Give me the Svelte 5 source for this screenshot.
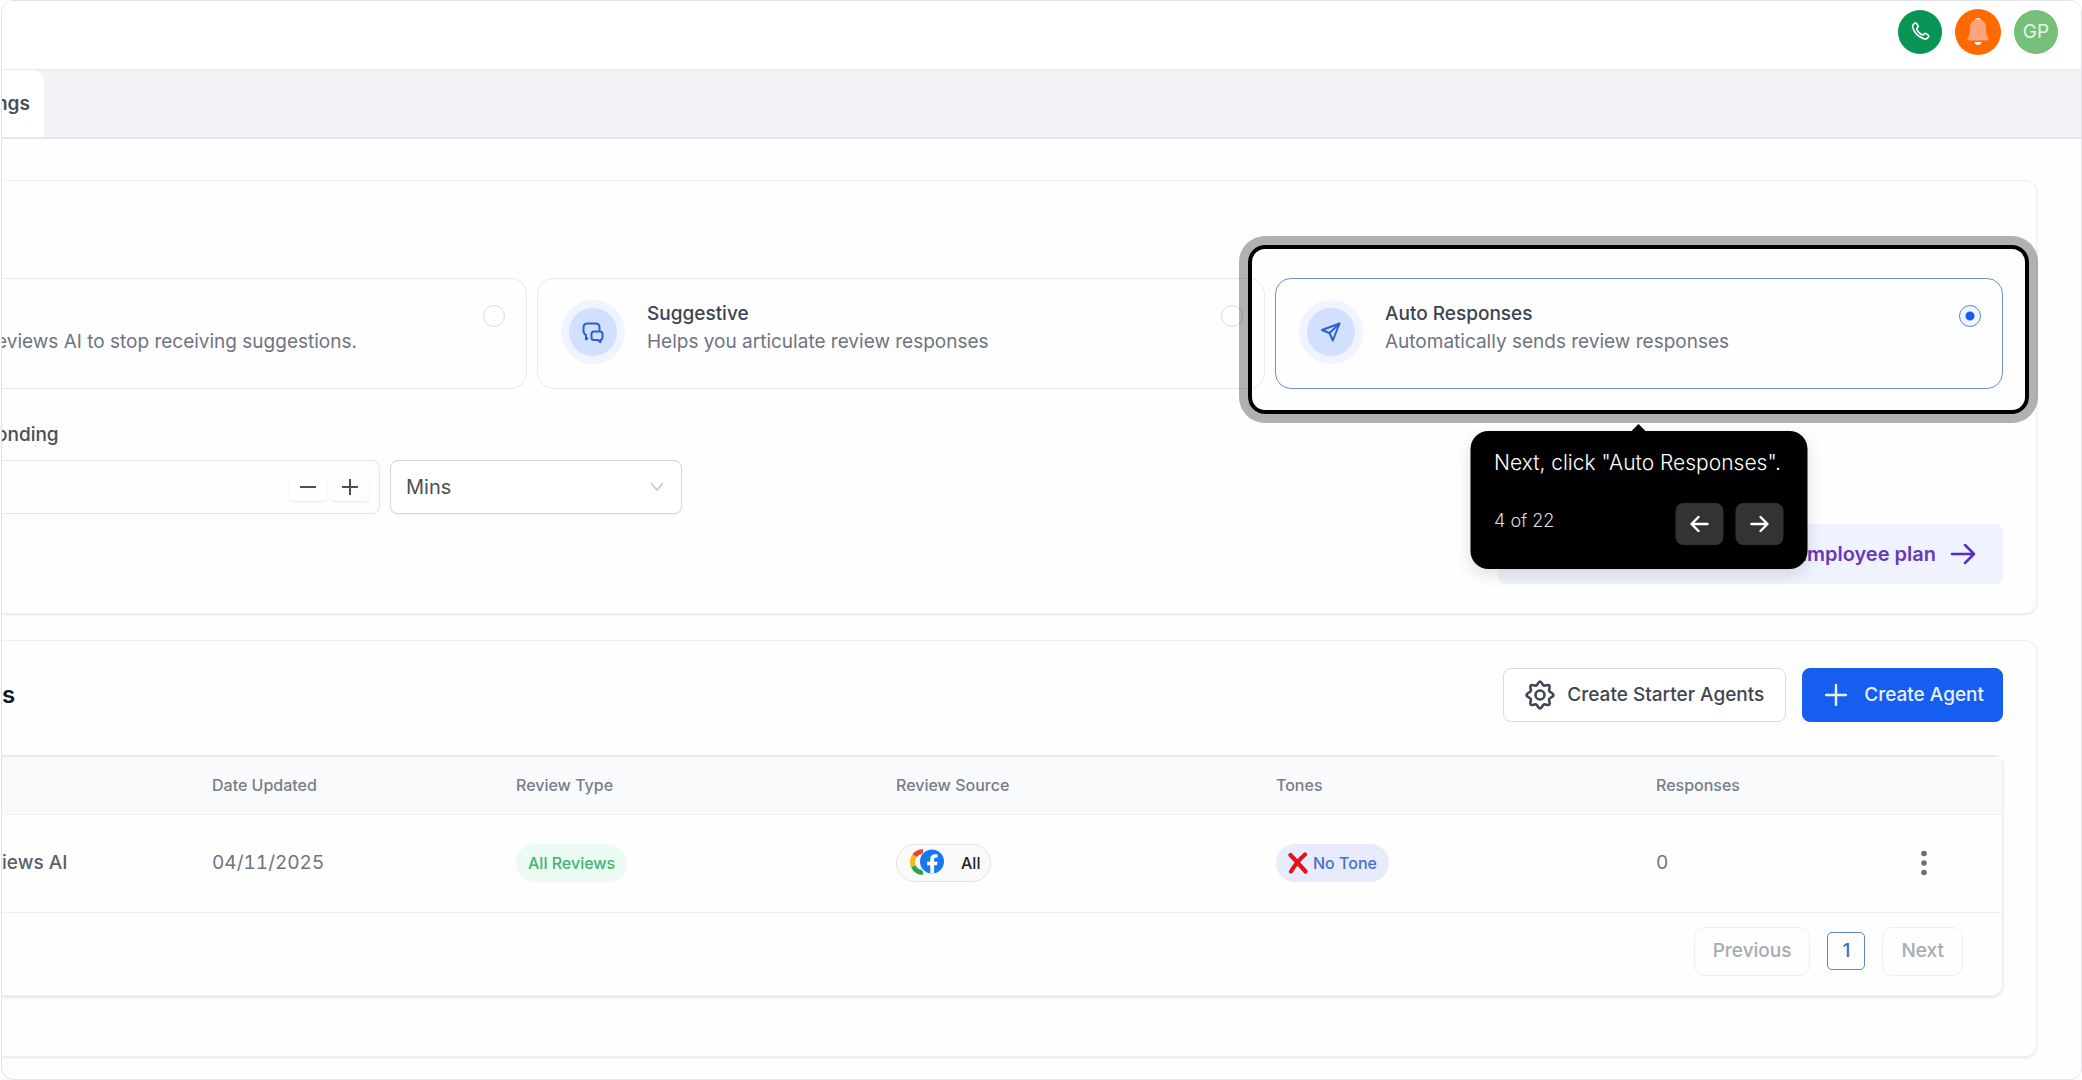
<!-- App.svelte — Reviews AI settings with guided walkthrough -->
<script lang="ts">
  type Mode = { id: string; title: string; text: string; icon: "" | "chat" | "send" };

  const modes: Mode[] = [
    { id: "off", title: "", text: "eviews AI to stop receiving suggestions.", icon: "" },
    { id: "suggestive", title: "Suggestive", text: "Helps you articulate review responses", icon: "chat" },
    { id: "auto", title: "Auto Responses", text: "Automatically sends review responses", icon: "send" },
  ];
  const agents = [{ name: "iews AI", updated: "04/11/2025", type: "All Reviews", source: "All", tone: "No Tone", responses: 0 }];
  const TOTAL = 22;

  let mode = $state("auto");
  let unit = $state("Mins");
  let wait = $state("");
  let step = $state(4);

  function bump(by: number) {
    wait = String(Math.max(0, (Number(wait) || 0) + by));
  }
</script>

<div class="frame">
  <header class="topbar">
    <button class="round phone" aria-label="Call">
      <svg viewBox="0 0 24 24" width="22" height="22" fill="none" stroke="currentColor" stroke-width="1.8" stroke-linejoin="round"><path d="M8.4 8.9a13.6 13.6 0 0 0 2.6 3.7 13.6 13.6 0 0 0 3.7 2.6c.3.1.5 0 .7-.1l1.3-1.2c.6-.5 1.3-.5 1.9-.1l2.2 1.5c.8.6.8 1.6.2 2.3l-1 1c-.9.9-2.1 1.2-3.3.9a20 20 0 0 1-8-4.6 20 20 0 0 1-4.7-8c-.3-1.2 0-2.4.9-3.3l1-1c.7-.6 1.7-.6 2.3.2l1.5 2.2c.4.6.4 1.3-.1 1.9L8.5 8.2c-.2.2-.2.4-.1.7z" /></svg>
    </button>
    <button class="round bell" aria-label="Notifications">
      <svg viewBox="0 0 24 30" width="24" height="30"><path d="M9 3.2C9.300 1.600 10.500 1 12 1s2.700.6 3 2.200z" fill="#fff" /><path d="M12 2.200c4.800 0 8 3.600 8 8.300 0 6 .9 8.400 2.300 10.500.8 1.200.2 2.500-1.200 2.500H2.900c-1.400 0-2-1.300-1.200-2.500C3.100 18.900 4 16.500 4 10.500c0-4.700 3.200-8.300 8-8.300z" fill="#ffa37a" /><path d="M8.500 25h7c-.3 1.900-1.700 3-3.500 3s-3.200-1.100-3.500-3z" fill="#fff" /></svg>
    </button>
    <button class="round avatar" aria-label="Account">GP</button>
  </header>

  <nav class="tabs"><a class="tab" href="#settings"><span class="cut">ngs</span></a></nav>

  <main>
    <section class="panel settings">
      <div class="modes" role="radiogroup" aria-label="Response mode">
        {#each modes as m (m.id)}
          <div class="mode-wrap">
            <label class="mode" class:selected={mode === m.id} class:open={!m.icon}>
              {#if m.icon}
                <span class="halo">
                  {#if m.icon === "chat"}
                    <svg viewBox="0 0 24 24" width="24" height="24" fill="none" stroke="currentColor" stroke-width="2" stroke-linejoin="round" stroke-linecap="round"><path d="M6.500 18.500 5 19.500v-4.500C3.200 14.200 2.500 12.700 2.500 10.500V7.500c0-2.500 1.500-4 4-4h8c2.500 0 4 1.500 4 4v3" /><path d="M13 11.500h6c1.500 0 2.500 1 2.500 2.500v3.500c0 1.300-.7 2.200-2 2.500v2.300L17 20h-4c-1.500 0-2.500-1-2.500-2.500V14c0-1.500 1-2.500 2.500-2.500z" /></svg>
                  {:else}
                    <svg viewBox="0 0 24 24" width="24" height="24" fill="none" stroke="currentColor" stroke-width="2" stroke-linejoin="round" stroke-linecap="round"><path d="M20.500 3.500 13.800 20.500 10.500 13 3 10z" /><path d="M20.500 3.500 10.500 13" /></svg>
                  {/if}
                </span>
              {/if}
              <span class="copy">
                <strong>{m.title}</strong>
                <span class:cut={!m.icon}>{m.text}</span>
              </span>
              <input type="radio" name="mode" value={m.id} bind:group={mode} aria-label={m.title || m.text} />
            </label>

            {#if m.id === "auto"}
              <div class="spotlight">
                <div class="tour" role="dialog" aria-label="Walkthrough">
                  <p>Next, click "Auto Responses".</p>
                  <div class="tour-foot">
                    <span>{step} of {TOTAL}</span>
                    <button aria-label="Back" onclick={() => (step = Math.max(1, step - 1))}>
                      <svg viewBox="0 0 20 20" width="20" height="20"><path d="M18 10H2M9 3 2 10l7 7" /></svg>
                    </button>
                    <button aria-label="Forward" onclick={() => (step = Math.min(TOTAL, step + 1))}>
                      <svg viewBox="0 0 20 20" width="20" height="20"><path d="M2 10h16M11 3l7 7-7 7" /></svg>
                    </button>
                  </div>
                </div>
              </div>
            {/if}
          </div>
        {/each}
      </div>

      <label class="field-label" for="wait"><span class="cut">onding</span></label>
      <div class="fields">
        <div class="number">
          <input id="wait" type="text" inputmode="numeric" bind:value={wait} />
          <button aria-label="Decrease" onclick={() => bump(-1)}><svg viewBox="0 0 18 18" width="18" height="18"><path d="M1 9h16" /></svg></button>
          <button aria-label="Increase" onclick={() => bump(1)}><svg viewBox="0 0 18 18" width="18" height="18"><path d="M1 9h16M9 1v16" /></svg></button>
        </div>
        <div class="select">
          <select bind:value={unit} aria-label="Time unit">
            <option>Mins</option>
            <option>Hours</option>
          </select>
          <svg viewBox="0 0 14 10" width="14" height="10"><path d="m1 1 6 7 6-7" /></svg>
        </div>
      </div>

      <a class="plan" href="#plan">
        Employee plan
        <svg viewBox="0 0 26 24" width="26" height="24"><path d="M2 12h22M15 3l9 9-9 9" /></svg>
      </a>
    </section>

    <section class="panel agents">
      <div class="agents-head">
        <h2>s</h2>
        <button class="btn">
          <svg viewBox="0 0 30 30" width="30" height="30" fill="none" stroke="currentColor" stroke-width="2.600" stroke-linejoin="round"><circle cx="15" cy="15" r="4.500" /><path d="M15 1.500c1.800 0 2.200 3.400 3.800 4 1.600.7 4.200-1.400 5.500-.1s-.8 3.900-.1 5.500c.7 1.600 4.300 2 4.300 4.100s-3.600 2.500-4.300 4.100c-.7 1.600 1.400 4.200.1 5.500s-3.900-.8-5.500-.1c-1.600.7-2 4-3.800 4s-2.200-3.300-3.800-4c-1.600-.7-4.200 1.400-5.500.1s.8-3.900.1-5.500c-.7-1.600-4.300-2-4.300-4.100s3.600-2.500 4.300-4.100c.7-1.600-1.400-4.200-.1-5.500s3.900.8 5.500.1c1.600-.6 2-4 3.800-4z" /></svg>
          Create Starter Agents
        </button>
        <button class="btn primary">
          <svg viewBox="0 0 22 22" width="22" height="22" fill="none" stroke="currentColor" stroke-width="2.400" stroke-linecap="round"><path d="M1 11h20M11 1v20" /></svg>
          Create Agent
        </button>
      </div>

      <div class="table-card">
        <table>
          <colgroup><col class="c-name" /><col class="c-date" /><col class="c-wide" /><col class="c-wide" /><col class="c-wide" /><col class="c-resp" /><col /></colgroup>
          <thead>
            <tr>
              <th></th>
              <th>Date Updated</th>
              <th>Review Type</th>
              <th>Review Source</th>
              <th>Tones</th>
              <th>Responses</th>
              <th></th>
            </tr>
          </thead>
          <tbody>
            {#each agents as a}
              <tr>
                <td class="name">{a.name}</td>
                <td>{a.updated}</td>
                <td><span class="pill green">{a.type}</span></td>
                <td>
                  <span class="pill source">
                    <svg viewBox="0 0 36 28" width="36" height="28" aria-hidden="true">
                      <g fill="none" stroke-width="5"><path d="M5.500 6.800A11 11 0 0 1 14 2.500" stroke="#e0443a" /><path d="M4.300 17.200A11 11 0 0 1 5.500 6.800" stroke="#f8b91d" /><path d="M14 23.500a11 11 0 0 1-9.700-6.300" stroke="#31a350" /></g>
                      <circle cx="23" cy="13" r="13" fill="#fafafa" /><circle cx="23" cy="12.500" r="12" fill="#1877f2" />
                      <path d="M21.300 24.500v-8.300h-3.200v-3.500h3.200v-2.600c0-3.200 1.900-4.900 4.700-4.900l2.600.2v3.100h-1.500c-1.500 0-2 .9-2 1.900v2.300h3.400l-.6 3.500h-2.800v8.300z" fill="#fff" />
                    </svg>
                    {a.source}
                  </span>
                </td>
                <td>
                  <span class="pill blue">
                    <svg viewBox="0 0 20 22" width="20" height="22" aria-hidden="true"><path d="M2.500 3Q10 11 17.500 19.500M17 2.500Q9 9.500 3 19.500" fill="none" stroke="#e2131a" stroke-width="4.200" stroke-linecap="round" /></svg>
                    {a.tone}
                  </span>
                </td>
                <td>{a.responses}</td>
                <td>
                  <button class="more" aria-label="More actions">
                    <svg viewBox="0 0 8 26" width="8" height="26" fill="currentColor"><circle cx="4" cy="3.500" r="2.800" /><circle cx="4" cy="13" r="2.800" /><circle cx="4" cy="22.500" r="2.800" /></svg>
                  </button>
                </td>
              </tr>
            {/each}
          </tbody>
        </table>
        <div class="pager">
          <button disabled>Previous</button>
          <button class="page" aria-current="page">1</button>
          <button disabled>Next</button>
        </div>
      </div>
    </section>
  </main>
</div>

<style>
  :global(body){background:#fff;}
  .frame{box-sizing:border-box;min-height:100vh;margin-left:1px;overflow:hidden;border:1px solid #e3e4e9;border-radius:12px;background:#fefefe;font-family:Inter,"Liberation Sans",sans-serif;font-size:19px;line-height:28px;color:#6f7480;}
  .frame *{box-sizing:border-box;}
  button,input,select{font:inherit;color:inherit;margin:0;}
  button{cursor:pointer;padding:0;border:0;background:none;}
  svg{display:block;flex-shrink:0;}
  /* first glyph runs off the left edge */
  .cut{margin-left:-6px;}

  .topbar{display:flex;align-items:center;justify-content:flex-end;gap:13px;height:68px;padding:0 23px 7px 0;background:#fff;}
  .round{display:flex;align-items:center;justify-content:center;width:44px;height:44px;border-radius:50%;color:#fff;}
  .phone{background:#079455;}
  .bell{width:46px;height:46px;background:#ff6a00;}
  .avatar{background:#75bf79;color:#e6f5e6;}

  .tabs{display:flex;height:70px;background:#f2f3f7;border-top:1px solid #e6e7ea;border-bottom:2px solid #e6e7ec;}
  .tab{display:flex;align-items:center;padding-right:14px;border-radius:0 12px 0 0;background:#fff;color:#475059;font-weight:600;text-decoration:none;}

  main{display:flex;flex-direction:column;gap:26px;padding:41px 44px 22px 0;}
  .panel{border:1px solid #f0f0f2;border-left:0;border-radius:0 12px 12px 0;box-shadow:0 1px 2px rgba(16,24,40,.1);background:#fefefe;}

  .settings{padding:97px 33px 29px 0;}
  .modes{display:grid;grid-template-columns:525fr 728fr 728fr;gap:10px;}
  .mode-wrap{position:relative;}
  .mode{display:flex;align-items:flex-start;gap:22px;height:111px;padding:21px 21px 0 23px;border:1px solid #e9eaec;border-radius:16px;cursor:pointer;}
  .mode.open{padding-left:0;border-left:0;border-radius:0 16px 16px 0;}
  .mode.selected{border-color:#6f8fc9;}
  .halo{display:flex;align-items:center;justify-content:center;width:64px;height:64px;border:8px solid #eff4ff;border-radius:50%;background:#d1e0ff;color:#2a5fd8;}
  .copy{display:flex;flex:1;flex-direction:column;white-space:nowrap;}
  .copy strong{min-height:28px;font-weight:500;color:#3d4452;}
  .mode input{appearance:none;width:22px;height:22px;margin-top:5px;border:1px solid #d9dbdf;border-radius:50%;background:#fff;}
  .mode input:checked{border-color:#5c83cf;background:radial-gradient(circle,#155eef 4px,#eff4ff 5px);}

  .spotlight{position:absolute;inset:-33px -26px -25px -27px;border:4px solid #000;border-radius:17px;box-shadow:0 0 0 9px rgba(0,0,0,.3);pointer-events:none;}
  .tour{position:absolute;z-index:2;top:calc(100% + 21px);left:50%;width:337px;height:138px;padding:18px 24px;transform:translateX(-50%);border-radius:18px;background:#000;box-shadow:0 6px 16px rgba(0,0,0,.12);pointer-events:auto;color:#fff;}
  .tour::before{content:"";position:absolute;top:-7px;left:50%;margin-left:-7px;border:7px solid transparent;border-top:0;border-bottom-color:#000;}
  .tour p{margin:0;font-size:21px;font-weight:300;white-space:nowrap;}
  .tour-foot{display:flex;align-items:center;gap:12px;margin-top:26px;}
  .tour-foot span{flex:1;padding-bottom:6px;font-size:18px;font-weight:300;color:#ddd;}
  .tour-foot button{display:flex;align-items:center;justify-content:center;width:48px;height:42px;border-radius:8px;background:#333;}
  .tour-foot path{fill:none;stroke:#fff;stroke-width:2.400;stroke-linecap:round;stroke-linejoin:round;}

  .field-label{display:block;margin-top:32px;color:#475059;font-weight:500;}
  .fields{display:flex;gap:10px;margin-top:11px;}
  .number{display:flex;align-items:center;gap:4px;width:378px;height:54px;padding-right:10px;border:1px solid #e4e5e8;border-left:0;border-radius:0 8px 8px 0;}
  .number input{flex:1;min-width:0;height:100%;border:0;outline:0;background:none;}
  .number button{display:flex;align-items:center;justify-content:center;width:38px;height:28px;border-radius:4px;box-shadow:0 1px 2px rgba(16,24,40,.1);}
  .number path{fill:none;stroke:#4a4f57;stroke-width:2;}
  .select{position:relative;width:292px;}
  .select select{appearance:none;width:100%;height:54px;padding:0 15px;border:1px solid #d6d7da;border-radius:8px;background:#fff;box-shadow:0 1px 2px rgba(16,24,40,.06);color:#4c5057;font-size:20px;}
  .select svg{position:absolute;top:22px;right:18px;pointer-events:none;}
  .select path{fill:none;stroke:#c2c5ca;stroke-width:1.500;}
  .plan{display:flex;align-items:center;justify-content:flex-end;gap:14px;width:505px;height:60px;margin:10px 0 0 auto;padding-right:27px;border-radius:8px;background:#eff3ff;color:#6938b8;font-size:20px;font-weight:600;text-decoration:none;}
  .plan path{fill:none;stroke:#5b2dbd;stroke-width:2.500;stroke-linecap:round;stroke-linejoin:round;}

  .agents{padding:27px 33px 60px 0;}
  .agents-head{display:flex;align-items:center;gap:16px;}
  h2{flex:1;margin:0;font-size:24px;font-weight:600;color:#15191f;}
  .btn{display:flex;align-items:center;gap:12px;height:54px;padding:0 21px;border:1px solid #d9dbdf;border-radius:8px;background:#fff;color:#3f4652;font-weight:500;}
  .btn.primary{gap:17px;padding:0 18px 0 22px;border-color:#155eef;background:#155eef;color:#eaf1ff;}
  .table-card{margin-top:33px;border:1px solid #ededf0;border-top:2px solid #e9eaec;border-left:0;border-radius:0 8px 12px 0;box-shadow:0 2px 3px rgba(16,24,40,.1);}
  table{width:100%;border-collapse:collapse;table-layout:fixed;font-variant-numeric:tabular-nums;}
  .c-name{width:9.5%;}
  .c-date{width:15.2%;}
  .c-wide{width:19%;}
  .c-resp{width:12.4%;}
  th,td{padding:0 0 0 20px;text-align:left;border-bottom:1px solid #efeff2;white-space:nowrap;}
  th{height:57px;background:#f9fafb;font-size:16px;font-weight:500;color:#777d8a;}
  td{height:98px;}
  td.name{padding-left:0;color:#5a6070;font-weight:500;}
  .pill{display:inline-flex;align-items:center;height:38px;padding:0 12px;border-radius:19px;font-size:16px;font-weight:500;vertical-align:middle;}
  .green{background:#ebfbf2;color:#3fb573;}
  .source{gap:16px;padding:0 10px 0 12px;border:1px solid #e2e3e6;background:#fafafb;color:#1f242c;}
  .blue{gap:5px;background:#e8ebfb;color:#4372cc;}
  .more{display:flex;align-items:center;justify-content:center;width:40px;height:40px;color:#6a6f7a;}
  .pager{display:flex;align-items:center;justify-content:flex-end;gap:17px;padding:14px 39px 19px 0;}
  .pager button{height:49px;padding:0 18px;border:1px solid #efeff1;border-radius:10px;color:#a8abb2;font-weight:500;}
  .pager .page{width:38px;height:38px;padding:0;border-color:#5f86c4;border-radius:5px;color:#3b69cf;}
</style>
